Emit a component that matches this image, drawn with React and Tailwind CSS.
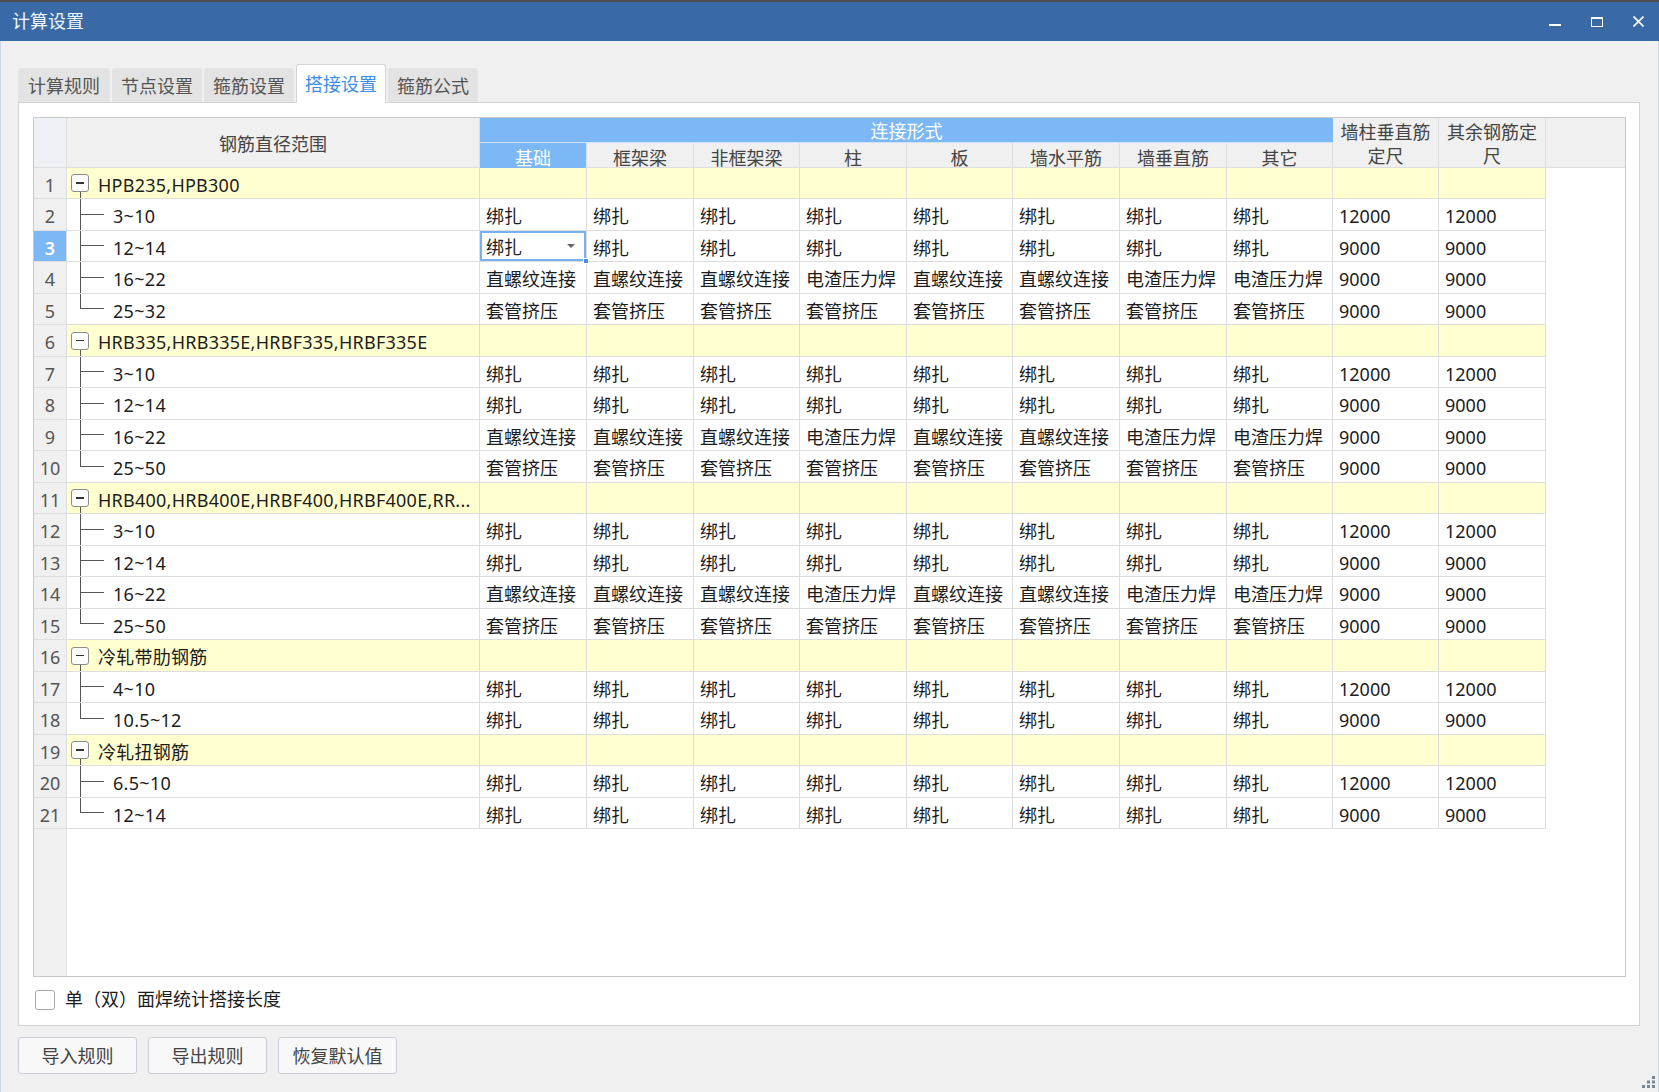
import React from 'react';

const BIND = ['绑扎', '绑扎', '绑扎', '绑扎', '绑扎', '绑扎', '绑扎', '绑扎'];
const SCREW = ['直螺纹连接', '直螺纹连接', '直螺纹连接', '电渣压力焊', '直螺纹连接', '直螺纹连接', '电渣压力焊', '电渣压力焊'];
const SLEEVE = ['套管挤压', '套管挤压', '套管挤压', '套管挤压', '套管挤压', '套管挤压', '套管挤压', '套管挤压'];

const groups = [
    {
        name: 'HPB235,HPB300',
        items: [
            ['3~10', BIND, '12000'],
            ['12~14', BIND, '9000'],
            ['16~22', SCREW, '9000'],
            ['25~32', SLEEVE, '9000'],
        ],
    },
    {
        name: 'HRB335,HRB335E,HRBF335,HRBF335E',
        items: [
            ['3~10', BIND, '12000'],
            ['12~14', BIND, '9000'],
            ['16~22', SCREW, '9000'],
            ['25~50', SLEEVE, '9000'],
        ],
    },
    {
        name: 'HRB400,HRB400E,HRBF400,HRBF400E,RR...',
        items: [
            ['3~10', BIND, '12000'],
            ['12~14', BIND, '9000'],
            ['16~22', SCREW, '9000'],
            ['25~50', SLEEVE, '9000'],
        ],
    },
    {
        name: '冷轧带肋钢筋',
        items: [
            ['4~10', BIND, '12000'],
            ['10.5~12', BIND, '9000'],
        ],
    },
    {
        name: '冷轧扭钢筋',
        items: [
            ['6.5~10', BIND, '12000'],
            ['12~14', BIND, '9000'],
        ],
    },
];

// flatten the tree into numbered rows
const rows = [];
groups.forEach((g) => {
    rows.push({ type: 'group', name: g.name });
    g.items.forEach((it, i) => {
        rows.push({ type: 'item', label: it[0], ways: it[1], len: it[2], last: i === g.items.length - 1 });
    });
});

const DATA_W = ['w-[107px]', 'w-[107px]', 'w-[106px]', 'w-[107px]', 'w-[106px]', 'w-[107px]', 'w-[107px]', 'w-[106px]'];
const SUBS = ['基础', '框架梁', '非框架梁', '柱', '板', '墙水平筋', '墙垂直筋', '其它'];
const TABS = ['计算规则', '节点设置', '箍筋设置', '搭接设置', '箍筋公式'];

function NumCell({ no, selected }) {
    return (
        <div
            className={
                'w-[33px] shrink-0 border-r border-b border-[#dedede] flex items-center justify-center pt-[4px] ' +
                (selected ? 'bg-[#7cb8f5] text-white font-semibold' : 'bg-[#f0f0f0] text-[#555]')
            }
        >
            {no}
        </div>
    );
}

function Cell({ w, yellow, children }) {
    return (
        <div
            className={
                w +
                ' shrink-0 border-r border-b border-[#dedede] flex items-center pl-[6px] pt-[4px] whitespace-nowrap overflow-hidden text-[#1c1c1c] ' +
                (yellow ? 'bg-[#ffffd0]' : 'bg-white')
            }
        >
            {children}
        </div>
    );
}

function EditorCell({ w, value }) {
    return (
        <div className={w + ' shrink-0 border-r border-b border-[#dedede] relative bg-white'}>
            <div className="h-full border-2 border-[#78b1f0] flex items-center pl-[4px] pr-[9px] pt-[3px] text-[#1c1c1c]">
                <span className="flex-1">{value}</span>
                <svg width="8" height="5" viewBox="0 0 8 5" className="mb-[2px]">
                    <path d="M0 0 L8 0 L4 4 Z" fill="#666" />
                </svg>
            </div>
            <div className="absolute right-[-3px] bottom-[-3px] w-[6px] h-[6px] bg-[#4a90e2] border border-white" />
        </div>
    );
}

function GroupRow({ no, name, h }) {
    return (
        <div className={'flex ' + h}>
            <NumCell no={no} />
            <div className="w-[413px] shrink-0 bg-[#ffffd0] border-r border-b border-[#dedede] flex">
                <div className="w-[4px] shrink-0" />
                <div className="w-[18px] shrink-0 flex flex-col items-center">
                    <div className="flex-1" />
                    <div className="w-[18px] h-[18px] border border-[#8c8c8c] rounded-[3px] bg-white flex items-center justify-center">
                        <div className="w-[8px] h-[1.5px] bg-[#333]" />
                    </div>
                    <div className="flex-1 w-px bg-[#555]" />
                </div>
                <span className="ml-[9px] mt-[4px] self-center whitespace-nowrap tracking-[0.25px] text-[#1c1c1c]">{name}</span>
            </div>
            {DATA_W.map((w, i) => (
                <Cell key={i} w={w} yellow />
            ))}
            <Cell w="w-[106px]" yellow />
            <Cell w="w-[107px]" yellow />
        </div>
    );
}

function ItemRow({ no, row, h, selected }) {
    return (
        <div className={'flex ' + h}>
            <NumCell no={no} selected={selected} />
            <div className="w-[413px] shrink-0 bg-white border-r border-b border-[#dedede] flex">
                <div className="w-[13px] shrink-0" />
                <div className="w-[24px] shrink-0 flex flex-col">
                    <div className="h-1/2 border-l border-b border-[#555]" />
                    <div className={'flex-1 ' + (row.last ? '' : 'border-l border-[#555]')} />
                </div>
                <span className="ml-[9px] mt-[4px] self-center whitespace-nowrap tracking-[0.3px] text-[#1c1c1c]">{row.label}</span>
            </div>
            {row.ways.map((v, i) =>
                selected && i === 0 ? (
                    <EditorCell key={i} w={DATA_W[i]} value={v} />
                ) : (
                    <Cell key={i} w={DATA_W[i]}>
                        {v}
                    </Cell>
                )
            )}
            <Cell w="w-[106px]">{row.len}</Cell>
            <Cell w="w-[107px]">{row.len}</Cell>
        </div>
    );
}

export default function App() {
    return (
        <div className="w-[1659px] h-[1092px] bg-[#f0f0f0] flex flex-col overflow-hidden text-[18px] font-['Noto_Sans','Noto_Sans_CJK_SC',sans-serif]">
            <div className="h-[2px] bg-[#4f4f4f]" />
            <div className="h-[39px] bg-[#3a6aa5] flex items-center pl-[12px] pr-[15px] text-[#f2f6fb]">
                <span className="flex-1">计算设置</span>
                <div className="flex items-center gap-[30px]">
                    <div className="w-[12px] h-[2px] bg-white mt-[7px]" />
                    <div className="w-[12px] h-[10px] border border-t-2 border-white" />
                    <svg width="11" height="11" viewBox="0 0 11 11">
                        <path d="M0.5 0.5 L10.5 10.5 M10.5 0.5 L0.5 10.5" stroke="white" strokeWidth="1.6" />
                    </svg>
                </div>
            </div>

            <div className="flex-1 flex flex-col border-x border-[#cfd8e3] pl-[17px]">
                {/* tabs */}
                <div className="mt-[23px] h-[38px] flex items-end gap-[2px]">
                    {TABS.map((t, i) =>
                        i === 3 ? (
                            <div
                                key={t}
                                className="w-[90px] h-[39px] -mb-px relative z-10 bg-white border border-b-0 border-[#d4d4d4] rounded-t-[3px] flex items-center justify-center pt-[1px] text-[#3c8ee6]"
                            >
                                {t}
                            </div>
                        ) : (
                            <div
                                key={t}
                                className={
                                    (i === 0 ? 'w-[92px]' : 'w-[90px]') +
                                    ' h-[34px] bg-[#e3e3e3] rounded-t-[3px] flex items-center justify-center pt-[2px] text-[#555]'
                                }
                            >
                                {t}
                            </div>
                        )
                    )}
                </div>

                {/* panel */}
                <div className="w-[1622px] h-[924px] bg-white border border-[#d4d4d4] pl-[14px] pt-[14px] flex flex-col">
                    <div className="w-[1593px] h-[860px] border border-[#c9c9c9] flex flex-col">
                        {/* header */}
                        <div className="flex h-[50px] bg-[#f0f0f0] border-b border-[#dedede] text-[#444]">
                            <div className="w-[33px] shrink-0 bg-[#eef1f5] border-r border-[#dedede]" />
                            <div className="w-[413px] shrink-0 border-r border-[#dedede] flex items-center justify-center pt-[4px]">钢筋直径范围</div>
                            <div className="w-[853px] shrink-0 flex flex-col">
                                <div className="h-[25px] bg-[#7cb8f5] border-b border-[#cfe3f9] flex items-center justify-center pt-[2px] text-white">
                                    连接形式
                                </div>
                                <div className="flex-1 flex">
                                    {SUBS.map((s, i) => (
                                        <div
                                            key={s}
                                            className={
                                                DATA_W[i] +
                                                ' shrink-0 border-r flex items-center justify-center pt-[2px] ' +
                                                (i === 0 ? 'bg-[#7cb8f5] text-white border-[#cfe3f9]' : 'border-[#dedede]')
                                            }
                                        >
                                            {s}
                                        </div>
                                    ))}
                                </div>
                            </div>
                            <div className="w-[106px] shrink-0 border-r border-[#dedede] flex items-center justify-center text-center leading-[24px] px-[2px] pt-[2px]">
                                墙柱垂直筋定尺
                            </div>
                            <div className="w-[107px] shrink-0 border-r border-[#dedede] flex items-center justify-center text-center leading-[24px] px-[2px] pt-[2px]">
                                其余钢筋定尺
                            </div>
                            <div className="flex-1" />
                        </div>

                        {rows.map((r, i) => {
                            const h = i % 2 === 0 ? 'h-[31px]' : 'h-[32px]';
                            return r.type === 'group' ? (
                                <GroupRow key={i} no={i + 1} name={r.name} h={h} />
                            ) : (
                                <ItemRow key={i} no={i + 1} row={r} h={h} selected={i === 2} />
                            );
                        })}

                        <div className="flex-1 flex">
                            <div className="w-[33px] bg-[#f0f0f0] border-r border-[#e2e2e2]" />
                        </div>
                    </div>

                    <div className="mt-[9px] flex items-center gap-[10px] text-[#1c1c1c]">
                        <div className="ml-[2px] w-[20px] h-[20px] border border-[#a8a8a8] rounded-[3px] bg-white" />
                        <span>单（双）面焊统计搭接长度</span>
                    </div>
                </div>

                {/* bottom buttons */}
                <div className="flex-1 flex items-start mt-[11px]">
                    <div className="flex gap-[11px]">
                        {['导入规则', '导出规则', '恢复默认值'].map((b) => (
                            <button
                                key={b}
                                className="w-[119px] h-[37px] bg-[#f8f8f8] border border-[#c9ced6] rounded-[3px] pt-[2px] text-[#444]"
                            >
                                {b}
                            </button>
                        ))}
                    </div>
                    <div className="ml-auto self-end mb-[4px] mr-[3px]">
                        <svg width="13" height="13" viewBox="0 0 13 13">
                            <g fill="#7a8594">
                                <rect x="10" y="1" width="3" height="3" />
                                <rect x="5" y="5.5" width="3" height="3" />
                                <rect x="10" y="5.5" width="3" height="3" />
                                <rect x="0" y="10" width="3" height="3" />
                                <rect x="5" y="10" width="3" height="3" />
                                <rect x="10" y="10" width="3" height="3" />
                            </g>
                        </svg>
                    </div>
                </div>
            </div>
        </div>
    );
}
